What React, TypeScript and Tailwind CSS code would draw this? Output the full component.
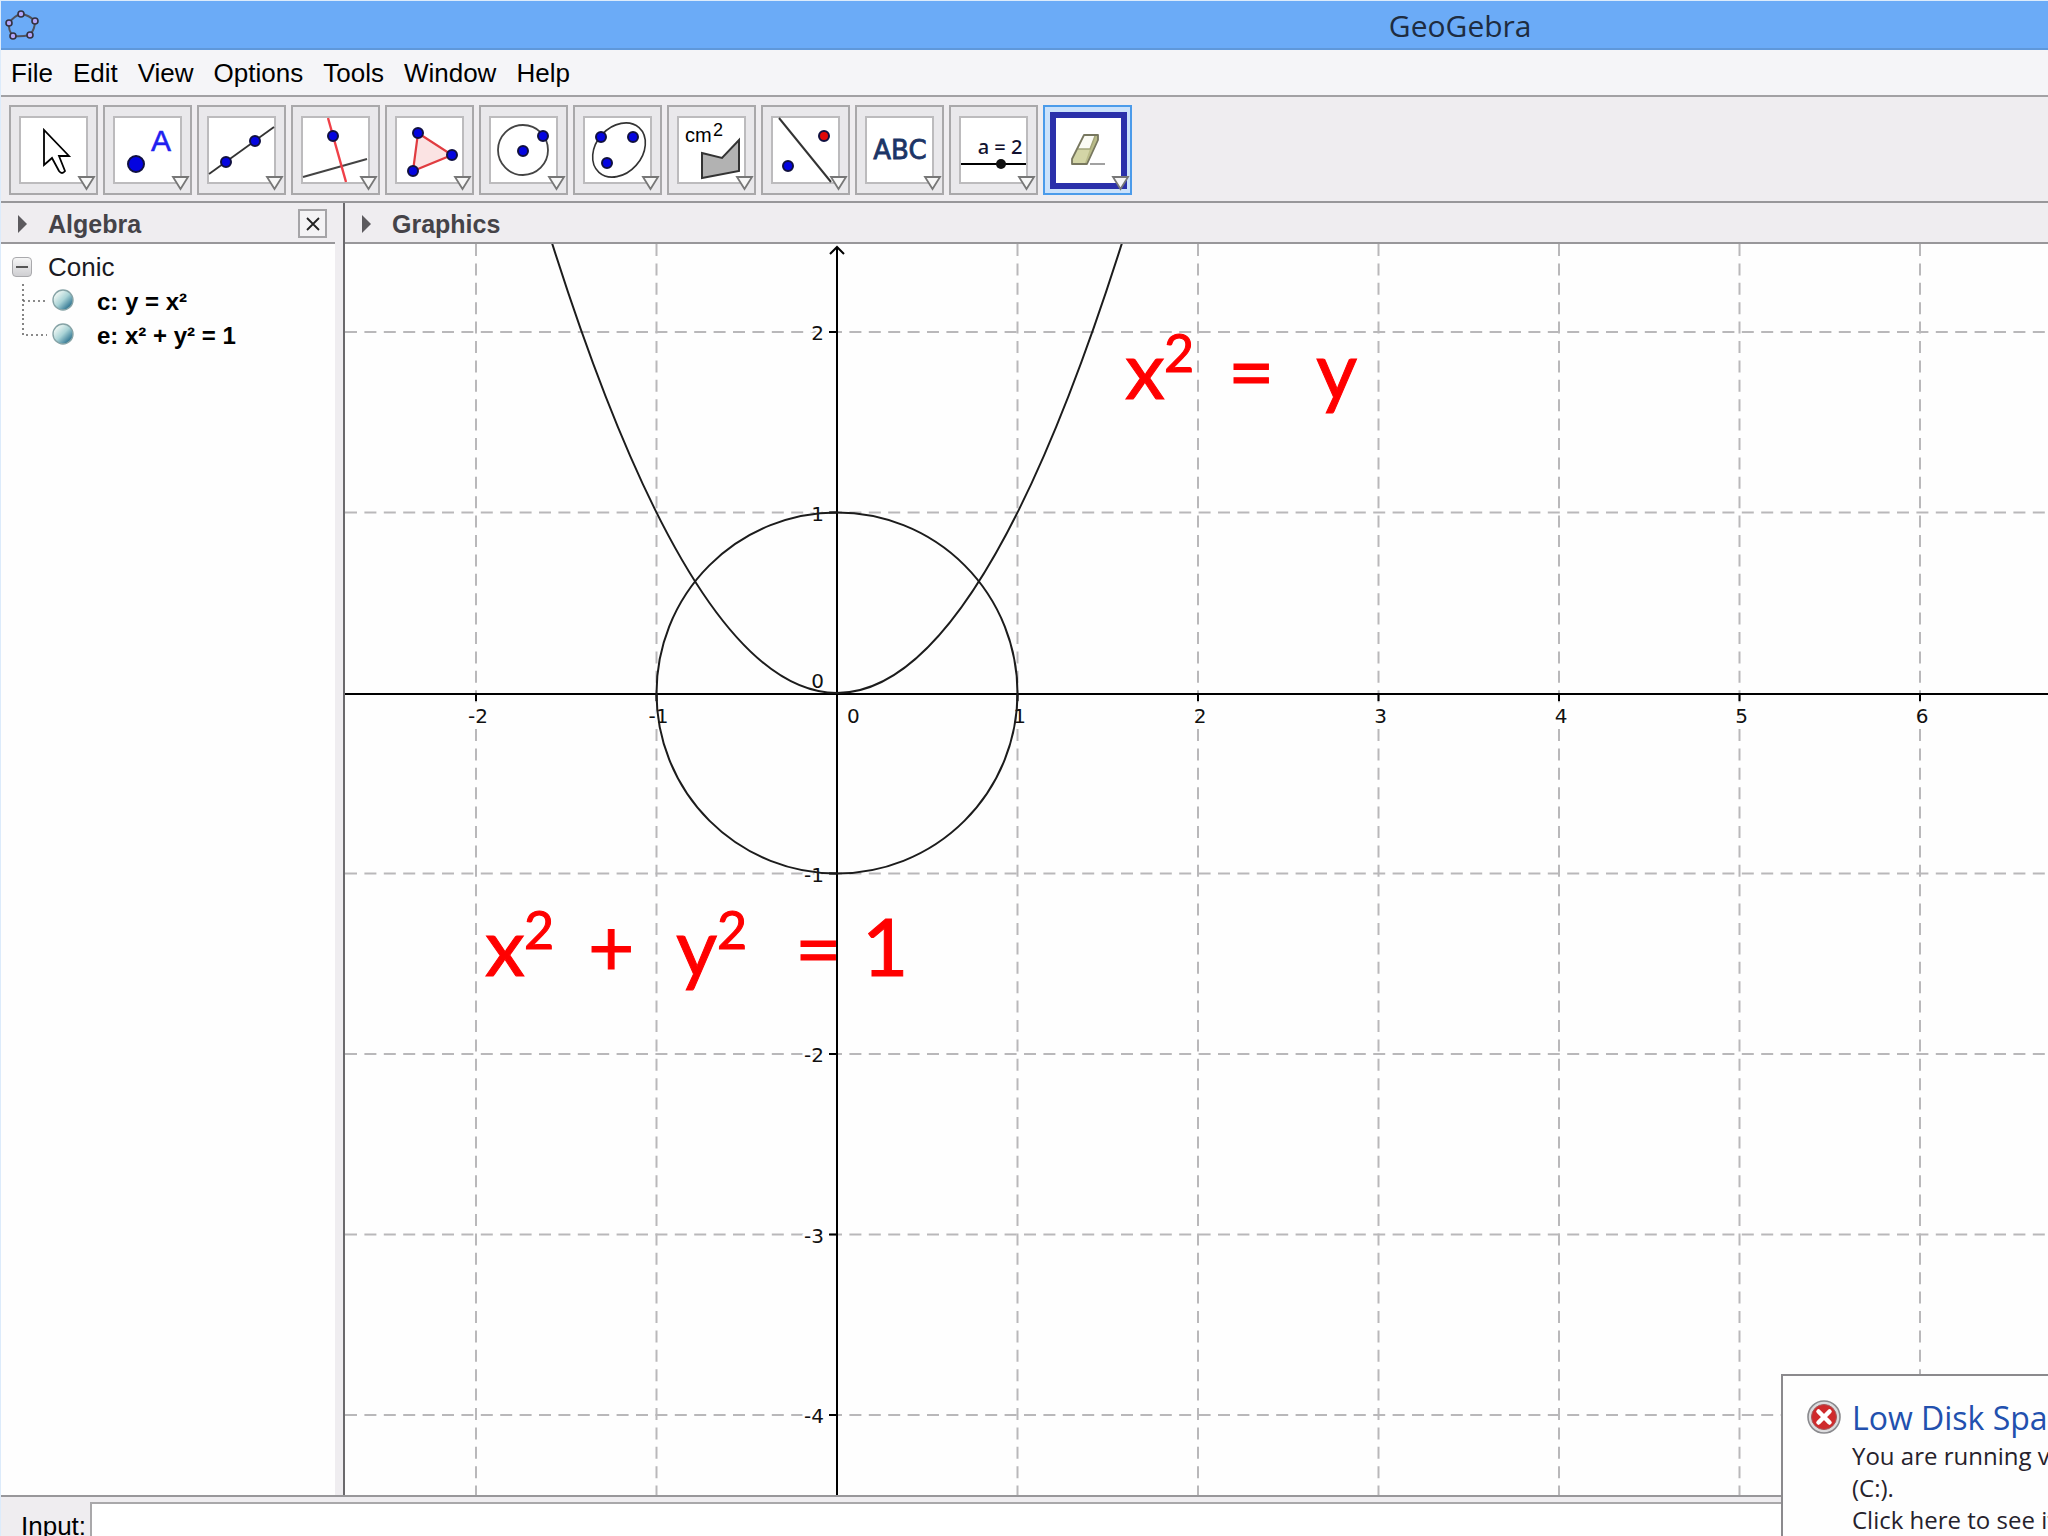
import type { ReactNode } from 'react';

const UNIT = 180.5;
const ORIGIN = { x: 492, y: 449 };

const toX = (x: number) => ORIGIN.x + x * UNIT;
const toY = (y: number) => ORIGIN.y - y * UNIT;

const menus = ['File', 'Edit', 'View', 'Options', 'Tools', 'Window', 'Help'];
const gridX = [-2, -1, 1, 2, 3, 4, 5, 6];
const gridY = [2, 1, -1, -2, -3, -4];

interface DotProps {
  x: number;
  y: number;
  r?: number;
  fill?: string;
}

function Dot({ x, y, r = 5, fill = '#0404e0' }: DotProps) {
  return <circle cx={x} cy={y} r={r} fill={fill} stroke="#101040" strokeWidth={2} />;
}

interface Tool {
  name: string;
  selected?: boolean;
  icon: ReactNode;
}

const tools: Tool[] = [
  {
    name: 'Move',
    icon: <path d="M35 25V60L43 53L50 66Q53 70 56 66L50 51H60Z" fill="#fff" stroke="#000" strokeWidth={1.8} />,
  },
  {
    name: 'Point',
    icon: (
      <>
        <Dot x={33} y={59} r={8} />
        <text x={58} y={46} textAnchor="middle" fontSize={30} fill="#2020f0" fontFamily="Liberation Sans, sans-serif" stroke="#2020f0" strokeWidth={0.5}>A</text>
      </>
    ),
  },
  {
    name: 'Line',
    icon: (
      <>
        <path d="M12 69L77 22" stroke="#333" strokeWidth={1.8} />
        <Dot x={29} y={57} />
        <Dot x={58} y={36} />
      </>
    ),
  },
  {
    name: 'Perpendicular Line',
    icon: (
      <>
        <path d="M12 72L76 54" stroke="#444" strokeWidth={2} />
        <path d="M37 13L55 77" stroke="#f04048" strokeWidth={2.4} />
        <Dot x={42} y={31} />
      </>
    ),
  },
  {
    name: 'Polygon',
    icon: (
      <>
        <path d="M33 28L67 50L28 66Z" fill="#fbe3e3" stroke="#e03c40" strokeWidth={2.2} />
        <Dot x={33} y={28} />
        <Dot x={67} y={50} />
        <Dot x={28} y={66} />
      </>
    ),
  },
  {
    name: 'Circle with Center',
    icon: (
      <>
        <circle cx={44} cy={45} r={25} fill="none" stroke="#444" strokeWidth={1.8} />
        <Dot x={44} y={46} />
        <Dot x={64} y={31} />
      </>
    ),
  },
  {
    name: 'Ellipse',
    icon: (
      <>
        <ellipse cx={46} cy={45} rx={30} ry={23} transform="rotate(-48 46 45)" fill="none" stroke="#333" strokeWidth={1.6} />
        <Dot x={28} y={32} />
        <Dot x={60} y={32} />
        <Dot x={34} y={58} />
      </>
    ),
  },
  {
    name: 'Area',
    icon: (
      <>
        <text x={18} y={37} fontSize={20} fill="#000" fontFamily="Liberation Sans, sans-serif">cm</text>
        <text x={46} y={31} fontSize={18} fill="#000" fontFamily="Liberation Sans, sans-serif">2</text>
        <path d="M35 48L55 53L72 35V66L35 73Z" fill="#b2b2b2" stroke="#333" strokeWidth={2} />
      </>
    ),
  },
  {
    name: 'Reflect about Line',
    icon: (
      <>
        <path d="M18 13L70 77" stroke="#333" strokeWidth={2} />
        <Dot x={63} y={31} fill="#e00808" />
        <Dot x={27} y={61} />
      </>
    ),
  },
  {
    name: 'Text',
    icon: (
      <text x={45} y={54} textAnchor="middle" fontSize={26} fill="#1c3566" fontFamily="DejaVu Sans, sans-serif" stroke="#1c3566" strokeWidth={0.8}>ABC</text>
    ),
  },
  {
    name: 'Slider',
    icon: (
      <>
        <text x={51} y={49} textAnchor="middle" fontSize={20} fontWeight={500} fill="#111130" fontFamily="Noto Sans, sans-serif">a = 2</text>
        <path d="M12 59H77" stroke="#000" strokeWidth={2} />
        <circle cx={52} cy={59} r={5} fill="#111" />
      </>
    ),
  },
  {
    name: 'Delete Object',
    selected: true,
    icon: (
      <>
        <path d="M41 30H55V35L44 59H29V54Z" fill="#d3d5a6" />
        <path d="M41 31H52L47 44H35Z" fill="#fbfbf4" />
        <path d="M52 31H55V35L44 59L42 58L47 44Z" fill="#b9bb88" />
        <path d="M35 44H47L52 31" fill="none" stroke="#a3a57a" strokeWidth={1.4} />
        <path d="M41 30H55V35L44 59H29V54Z" fill="none" stroke="#77775f" strokeWidth={1.8} strokeLinejoin="round" />
        <path d="M47 59H62" stroke="#8a8a8a" strokeWidth={1.6} />
      </>
    ),
  },
];

function ToolButton({ name, selected, icon }: Tool) {
  return (
    <button
      type="button"
      aria-label={name}
      className={`h-[90px] w-[89px] shrink-0 border-2 ${selected ? 'border-[#4b9bea] bg-[#cbe2fb]' : 'border-[#a9a8aa] bg-[#e9e8eb]'}`}
    >
      <svg viewBox="2 2 85 86" className="block h-full w-full">
        {selected ? (
          <rect x={10} y={10} width={71} height={71} fill="#fff" stroke="#2a30aa" strokeWidth={6} />
        ) : (
          <rect x={11} y={12} width={67} height={66} fill="#fff" stroke="#bcbbbd" strokeWidth={2} />
        )}
        {icon}
        <path d="M70 72H85L77.5 84Z" fill="#f7f7f7" stroke="#777" strokeWidth={1.8} />
      </svg>
    </button>
  );
}

function PanelHeader({ title, closable }: { title: string; closable?: boolean }) {
  return (
    <div className="flex h-[41px] shrink-0 items-center border-b-2 border-[#98979a] bg-[#efedf0] pt-0.5 pl-4 font-['Liberation_Sans',sans-serif]">
      <svg width="31" height="20" viewBox="0 0 31 20">
        <path d="M1 1L10 10L1 19Z" fill="#5c5a5e" />
      </svg>
      <h2 className="text-[25px] leading-8 font-bold text-[#454348]">{title}</h2>
      {closable && (
        <button type="button" aria-label={`Close ${title}`} className="mr-2 ml-auto flex h-[29px] w-[29px] items-center justify-center border-2 border-[#a5a4a7] bg-[#f4f3f5]">
          <svg width="14" height="14" viewBox="0 0 14 14">
            <path d="M1 1L13 13M13 1L1 13" stroke="#222" strokeWidth={1.8} />
          </svg>
        </button>
      )}
    </div>
  );
}

function TreeItem({ label, last }: { label: string; last?: boolean }) {
  return (
    <li className="flex h-[34px] items-center">
      <svg width="74" height="34" viewBox="0 0 74 34" className="shrink-0">
        <defs>
          <linearGradient id="marble" x1="0" y1="0" x2="1" y2="1">
            <stop offset="0.2" stopColor="#e9f4f1" />
            <stop offset="0.5" stopColor="#a9d3d6" />
            <stop offset="0.8" stopColor="#3d7f99" />
          </linearGradient>
        </defs>
        <path d={last ? 'M22 0V17H46' : 'M22 0V34M22 17H46'} fill="none" stroke="#666" strokeWidth={1.6} strokeDasharray="2 3" />
        <circle cx={62} cy={16} r={10} fill="url(#marble)" stroke="#86a3a6" strokeWidth={1.4} />
      </svg>
      <span className="pt-0.5 pl-[22px] text-2xl font-bold text-black">{label}</span>
    </li>
  );
}

function Graph() {
  const edge = 1.7;
  const parabola = `M${toX(-edge)} ${toY(edge * edge)}Q${toX(0)} ${toY(-edge * edge)} ${toX(edge)} ${toY(edge * edge)}`;

  return (
    <svg className="absolute inset-0 h-full w-full" role="img" aria-label="Graph of a parabola and a circle">
      <g stroke="#b9b8ba" strokeWidth={2} strokeDasharray="12 7.4">
        {gridX.map((x) => (
          <line key={x} x1={toX(x)} x2={toX(x)} y1={0} y2="100%" />
        ))}
        {gridY.map((y) => (
          <line key={y} x1={0} x2="100%" y1={toY(y)} y2={toY(y)} />
        ))}
      </g>

      <g fontFamily="DejaVu Sans, sans-serif" fontSize={20} fill="#111" stroke="#fff" strokeWidth={5} paintOrder="stroke">
        {gridX.map((x) => (
          <text key={x} x={toX(x) + 2} y={479} textAnchor="middle">{x}</text>
        ))}
        {gridY.map((y) => (
          <text key={y} x={479} y={toY(y) + 8} textAnchor="end">{y}</text>
        ))}
        <text x={502} y={479}>0</text>
        <text x={479} y={444} textAnchor="end">0</text>
      </g>

      <g stroke="#000" strokeWidth={2}>
        <line x1={0} x2="100%" y1={450} y2={450} />
        <line x1={ORIGIN.x} x2={ORIGIN.x} y1={3} y2="100%" />
        {gridX.map((x) => (
          <line key={x} x1={toX(x)} x2={toX(x)} y1={450} y2={457} />
        ))}
        {gridY.map((y) => (
          <line key={y} x1={484} x2={ORIGIN.x} y1={toY(y)} y2={toY(y)} />
        ))}
        <path d="M485 10L492 3L499 10" fill="none" />
      </g>

      <g fill="none" stroke="#1c1c1c" strokeWidth={2}>
        <path d={parabola} />
        <circle cx={ORIGIN.x} cy={ORIGIN.y} r={UNIT} />
      </g>

      <g fill="#ff0000" stroke="#ff0000" strokeWidth={1} fontFamily="Lato, sans-serif" fontSize={80}>
        <text x={780} y={155}>x</text>
        <text x={819} y={128} fontSize={52}>2</text>
        <text x={883} y={157}>=</text>
        <text x={971} y={155}>y</text>

        <text x={140} y={732}>x</text>
        <text x={179} y={705} fontSize={52}>2</text>
        <text x={243} y={732}>+</text>
        <text x={331} y={732}>y</text>
        <text x={372} y={705} fontSize={52}>2</text>
        <text x={450} y={734}>=</text>
        <text x={517} y={732}>1</text>
      </g>
    </svg>
  );
}

function DiskSpaceToast() {
  return (
    <div role="alert" className="absolute right-0 bottom-0 flex h-[162px] w-[267px] gap-[11px] overflow-hidden border-t-2 border-l-2 border-[#8b8a8d] bg-[#fefefe] pt-5 pl-6 font-['Open_Sans',sans-serif] whitespace-nowrap">
      <svg width="34" height="34" viewBox="0 0 34 34" className="mt-1 shrink-0">
        <circle cx="17" cy="17" r="16" fill="#dcdcde" stroke="#8a8a8e" strokeWidth={1.6} />
        <circle cx="17" cy="17" r="12.5" fill="#cf2a2c" stroke="#a5595b" />
        <path d="M11.5 11.5L22.5 22.5M22.5 11.5L11.5 22.5" stroke="#fff" strokeWidth={4.5} strokeLinecap="round" />
      </svg>
      <div>
        <h3 className="text-[32px] leading-[44px] text-[#2250ae]">Low Disk Space</h3>
        <p className="text-2xl leading-8 text-[#26222c]">
          You are running very low on disk space
          <br />
          (C:).
          <br />
          Click here to see if you can free space
        </p>
      </div>
    </div>
  );
}

export default function App() {
  return (
    <div className="relative flex h-screen flex-col overflow-hidden border-t border-l border-[#dcebfb] bg-[#efedf0] font-['Liberation_Sans',sans-serif]">
      <header className="flex h-[49px] shrink-0 items-center border-b-2 border-[#5f98da] bg-[#6babf7]">
        <div className="w-[67.8%]">
          <svg width="42" height="42" viewBox="0 0 42 42">
            <path d="M20 10Q28 11 34 17Q34 25 29 31Q20 33 12 32Q7 26 8 19Q13 12 20 10Z" fill="none" stroke="#50525c" strokeWidth={2} />
            <g fill="#b3a6fa" stroke="#33313f" strokeWidth={1.6}>
              <circle cx="20" cy="10" r="3" />
              <circle cx="34" cy="17" r="3" />
              <circle cx="29" cy="31" r="3" />
              <circle cx="12" cy="32" r="3" />
              <circle cx="8" cy="19" r="3" />
            </g>
          </svg>
        </div>
        <h1 className="pt-0.5 font-['Open_Sans',sans-serif] text-[30px] leading-9 text-[#1e2c40]">GeoGebra</h1>
      </header>

      <nav className="flex h-[47px] shrink-0 items-center gap-5 border-b-2 border-[#a2a1a4] bg-[#f5f5f8] pl-[10px]">
        {menus.map((menu) => (
          <button key={menu} type="button" className="text-[26px] leading-8 text-black">
            {menu}
          </button>
        ))}
      </nav>

      <div className="flex shrink-0 gap-[5px] border-b-2 border-[#98979a] pt-2 pb-[6px] pl-2">
        {tools.map((tool) => (
          <ToolButton key={tool.name} {...tool} />
        ))}
      </div>

      <main className="flex min-h-0 flex-1">
        <aside className="flex w-[344px] shrink-0 flex-col border-r-2 border-[#6a696c] pr-2">
          <PanelHeader title="Algebra" closable />
          <div className="flex-1 bg-[#fefefe] pt-[6px]">
            <div className="flex h-[34px] items-center gap-4 pl-[11px]">
              <button type="button" aria-label="Collapse Conic" className="flex h-5 w-5 items-center justify-center rounded-sm border border-[#a9a9ac] bg-linear-to-b from-[#f6f6f6] to-[#cfcfd2]">
                <span className="h-0.5 w-3 bg-[#555]" />
              </button>
              <span className="text-[26px] leading-8 text-[#1a1a22]">Conic</span>
            </div>
            <ul>
              <TreeItem label="c: y = x²" />
              <TreeItem label="e: x² + y² = 1" last />
            </ul>
          </div>
        </aside>

        <section className="flex min-w-0 flex-1 flex-col">
          <PanelHeader title="Graphics" />
          <div className="relative flex-1 overflow-hidden bg-[#fefefe]">
            <Graph />
          </div>
        </section>
      </main>

      <footer className="h-[41px] shrink-0 overflow-hidden border-t-2 border-[#98979a] pt-[5px]">
        <div className="flex h-12 items-center gap-1 pl-5">
          <label htmlFor="command" className="text-[26px] leading-8 text-black">
            Input:
          </label>
          <input id="command" type="text" className="h-full min-w-0 flex-1 border-2 border-[#a9a8aa] bg-white px-2 text-[26px]" />
        </div>
      </footer>

      <DiskSpaceToast />
    </div>
  );
}
